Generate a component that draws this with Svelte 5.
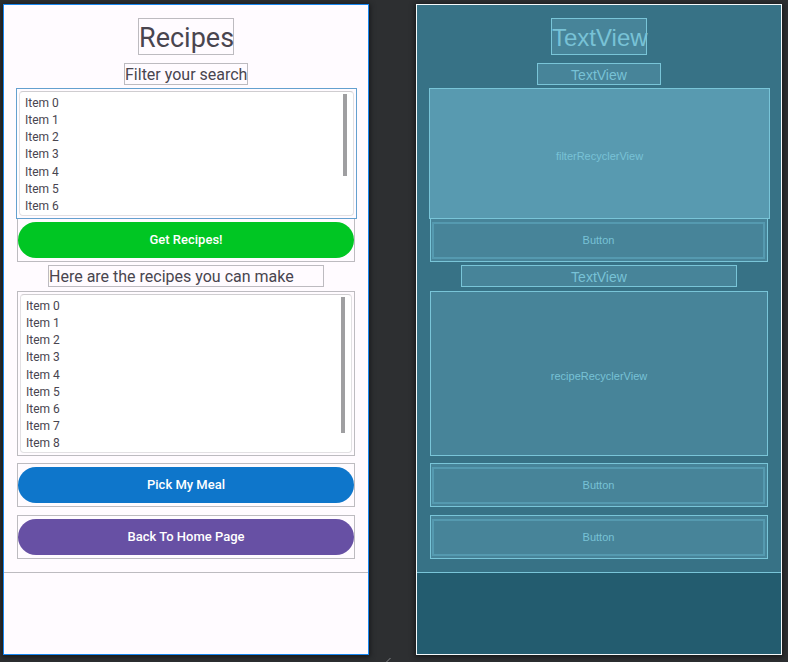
<script>
  const filters = Array.from({ length: 7 }, (_, i) => `Item ${i}`);
  const recipes = Array.from({ length: 9 }, (_, i) => `Item ${i}`);
</script>

{#snippet list(items, kind)}
  <div class="recycler {kind}">
    <div class="frame">
      <ul>
        {#each items as item}
          <li>{item}</li>
        {/each}
      </ul>
      <span class="thumb"></span>
    </div>
  </div>
{/snippet}

<main>
  <section class="screen design" aria-label="Design">
    <div class="content">
      <h1 class="box title">Recipes</h1>
      <p class="box label short">Filter your search</p>
      {@render list(filters, 'filter')}
      <div class="box action joined"><button class="green">Get Recipes!</button></div>
      <p class="box label long">Here are the recipes you can make</p>
      {@render list(recipes, 'recipe')}
      <div class="box action"><button class="blue">Pick My Meal</button></div>
      <div class="box action"><button class="purple">Back To Home Page</button></div>
    </div>
  </section>

  <section class="screen blueprint" aria-label="Blueprint">
    <div class="content">
      <div class="box title">TextView</div>
      <div class="box label short">TextView</div>
      <div class="recycler filter">filterRecyclerView</div>
      <div class="box action joined"><span>Button</span></div>
      <div class="box label long">TextView</div>
      <div class="recycler recipe">recipeRecyclerView</div>
      <div class="box action"><span>Button</span></div>
      <div class="box action"><span>Button</span></div>
    </div>
  </section>

  <svg class="grip" width="5" height="4" viewBox="0 0 5 4" aria-hidden="true">
    <path d="M0.5 4 L4.5 0" stroke="#85878a" fill="none" />
  </svg>
</main>

<style>
  :global(body) {
    margin: 0;
    background: #2d2f31;
  }
  main {
    position: relative;
    box-sizing: border-box;
    min-height: 100vh;
    padding: 4px 6px 7px 3px;
    display: grid;
    grid-template-columns: 1fr 1fr;
    gap: 47px;
  }
  main *,
  main *::before {
    box-sizing: border-box;
  }
  .screen {
    border: 1px solid;
    box-shadow: 0 1px 5px 1px #171819;
  }
  .content {
    display: flex;
    flex-direction: column;
    align-items: center;
    padding: 13px 13px 13px;
    border-bottom: 1px solid var(--line);
  }
  .design {
    --line: #bdbbc0;
    border-color: #1886f0;
    background: #fffbff;
    color: #49454f;
    font-family: Roboto, sans-serif;
  }
  .blueprint {
    --line: #79c5d8;
    border-color: #f4fafb;
    background: #235c6f;
    color: #78c2d6;
    font-family: "Liberation Sans", Arial, sans-serif;
    font-size: 11px;
  }
  .blueprint .content {
    background: #377286;
  }
  .box {
    margin: 0;
    border: 1px solid var(--line);
    font-weight: 400;
    white-space: nowrap;
  }
  .blueprint .box,
  .blueprint .recycler {
    background: #478499;
  }
  .title {
    width: 96px;
    height: 37px;
    margin-bottom: 8px;
    line-height: 38px;
    font-size: 27px;
  }
  .label {
    height: 22px;
    line-height: 22px;
    font-size: 16px;
  }
  .short {
    width: 124px;
    margin-bottom: 3px;
  }
  .long {
    width: 276px;
    margin: 3px 0 4px;
  }
  .blueprint .title {
    font-size: 24px;
    text-align: center;
  }
  .blueprint .label {
    font-size: 14px;
    text-align: center;
  }
  .recycler {
    align-self: stretch;
    border: 1px solid var(--line);
    padding: 2px;
    display: flex;
  }
  .blueprint .recycler {
    align-items: center;
    justify-content: center;
    padding: 4px 0 0;
  }
  .filter {
    position: relative;
    z-index: 1;
    height: 131px;
    margin: 0 -2px 0 -1px;
  }
  .design .filter {
    border-color: #64a0cf;
    background: #fffbff;
  }
  .blueprint .filter {
    background: #589ab0;
  }
  .recipe {
    height: 165px;
    margin-bottom: 7px;
  }
  .frame {
    flex: 1;
    display: flex;
    justify-content: space-between;
    border: 1px solid #e2e0e3;
    border-top-color: #cfcdd0;
    border-radius: 4px;
    background: #fff;
    padding: 2px 6px 0 5px;
  }
  ul {
    margin: 0;
    padding: 1px 0 0;
    list-style: none;
    display: flex;
    flex-direction: column;
    justify-content: space-between;
    font-size: 12px;
    line-height: 17px;
  }
  .thumb {
    width: 4px;
    height: 82px;
    background: #9f9fa1;
  }
  .recipe .thumb {
    height: 136px;
  }
  .action {
    align-self: stretch;
    height: 44px;
    padding: 3px 0 0;
    display: flex;
    align-items: flex-start;
  }
  .action + .action {
    margin-top: 8px;
  }
  .joined {
    margin-top: -1px;
  }
  button {
    flex: 1;
    height: 36px;
    padding: 0;
    border: 0;
    border-radius: 18px;
    color: #fff;
    font: 500 13px/18px Roboto, sans-serif;
  }
  .green {
    background: #00c623;
  }
  .blue {
    background: #0e76cb;
  }
  .purple {
    background: #6750a4;
  }
  .blueprint .action span {
    flex: 1;
    height: 37px;
    margin: 0 2px 0 1px;
    border: 2px solid #559ab0;
    text-align: center;
    line-height: 33px;
  }
  .grip {
    position: absolute;
    left: 49%;
    bottom: 0;
  }
</style>
